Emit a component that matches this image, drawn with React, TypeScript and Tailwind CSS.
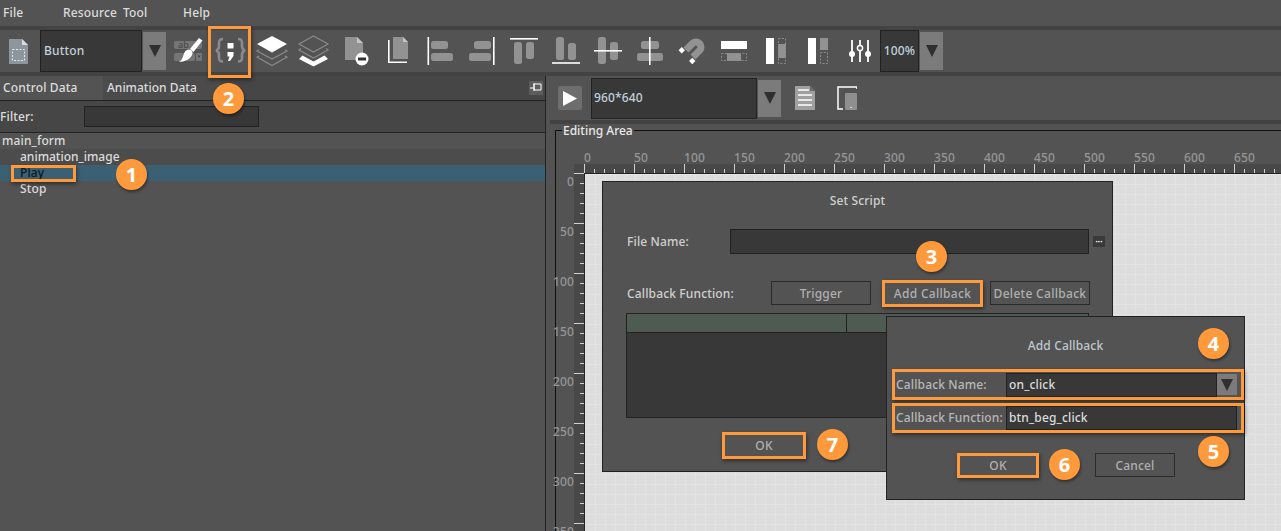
import type { ReactNode } from 'react'

const FONT = "font-['Noto_Sans',sans-serif]"
const HL = 'border-[3px] border-[#ff9a3c] shadow-[1px_2px_4px_rgba(0,0,0,0.45)]'

function Badge({ n, className }: { n: number; className: string }) {
  return (
    <div className={`absolute w-[31px] h-[31px] rounded-full bg-[#ff9a3c] text-white text-[20px] font-bold flex items-center justify-center shadow-[1px_2px_3px_rgba(0,0,0,0.4)] ${className}`}>
      {n}
    </div>
  )
}

function Arrow({ className }: { className: string }) {
  return (
    <div className={`bg-[#7b7b7b] flex items-center justify-center shrink-0 ${className}`}>
      <svg width="12" height="12" viewBox="0 0 12 12"><path d="M0 0h12L6 12z" fill="#303030" /></svg>
    </div>
  )
}

function Tool({ children }: { children: ReactNode }) {
  return (
    <div className="w-[42px] h-[42px] flex items-center justify-center shrink-0">
      <svg width="42" height="42" viewBox="0 0 42 42">{children}</svg>
    </div>
  )
}

const G = '#929292'
const D = '#8a8a8a'

function Toolbar() {
  return (
    <div className="h-[42px] flex items-center bg-[#535353]">
      <div className="w-[40px] h-[42px] flex items-center pl-[9px]">
        <svg width="20" height="25" viewBox="0 0 20 25">
          <path d="M0 0h13l6 6v19H0z" fill="#8d969c" />
          <path d="M13 0l6 6h-6z" fill="#d8dcdf" />
          <rect x="3.500" y="10.500" width="12" height="11" fill="none" stroke="#e4e8ea" strokeWidth="1" strokeDasharray="2 1.500" />
        </svg>
      </div>
      <div className="w-[102px] h-[42px] bg-[#383838] border border-[#222] flex items-center pl-[3px] text-[12px] text-[#c4d0dc]">Button</div>
      <Arrow className="w-[23px] h-[38px] mx-px" />
      <Tool>
        <rect x="7" y="11" width="28" height="8" rx="2" fill="#757575" />
        <text x="11" y="18" fontSize="9" fill="#4a4a4a" fontFamily="Noto Sans, sans-serif">ab</text>
        <rect x="7" y="23" width="21" height="8" rx="2" fill="#757575" />
        <rect x="29" y="23" width="6" height="8" rx="1" fill="#757575" />
        <path d="M30.500 25.500h3L32 28z" fill="#4a4a4a" />
        <path d="M32 8l3.500 2.500-9 11.500-3.500-3z" fill="#fff" />
        <path d="M21 19.500c3-.5 5 1.500 4.500 4-.8 5-8 8.500-14 8.500 3.500-1.500 4-4 5-7 .6-3 2.500-5 4.500-5.500z" fill="#fff" />
      </Tool>
      <Tool>
        <path d="M14 9c-3 0-4 1-4 4v3c0 2-1 4-3 4.500 2 .5 3 2.500 3 4.500v2.500c0 3 1 4 4 4M29 9c3 0 4 1 4 4v3c0 2 1 4 3 4.500-2 .5-3 2.500-3 4.500v2.500c0 3-1 4-4 4" fill="none" stroke={D} strokeWidth="2.600" />
        <rect x="18.500" y="13" width="6" height="5.500" fill="#fff" />
        <path d="M18.500 22h6v4l-3.500 5h-2l1.500-4.500h-2z" fill="#fff" />
      </Tool>
      <Tool>
        <path d="M8 20l-2 1 15 8 15-8-2-1M8 26l-2 1 15 8.500 15-8.500-2-1" fill="none" stroke={D} strokeWidth="1.200" />
        <path d="M21 6l15 8-15 8.500L6 14z" fill="#fff" />
      </Tool>
      <Tool>
        <path d="M20.500 6l14.500 8-14.500 8L6 14zM8 18.500L6 20l14.500 8L35 20l-2-1.500" fill="none" stroke={D} strokeWidth="1.200" />
        <path d="M6 29l3.500-3.500 11 6 11-6L35 29l-14.500 7.500z" fill="#fff" />
      </Tool>
      <Tool>
        <path d="M10 7h12l6 6v11c-4 0-6 2-7 6H10z" fill={G} />
        <path d="M22 7l6 6h-6z" fill="#c4c4c4" />
        <circle cx="27" cy="29" r="6.500" fill="#fff" />
        <rect x="23" y="27.500" width="8" height="3" fill="#333" />
      </Tool>
      <Tool>
        <path d="M16 7h10l5 5v17H16z" fill={G} />
        <path d="M26 7l5 5h-5z" fill="#c4c4c4" />
        <path d="M11.800 10v22.200H30" fill="none" stroke="#fff" strokeWidth="1.600" />
      </Tool>
      <Tool>
        <rect x="8.500" y="7" width="1.600" height="28" fill="#fff" />
        <rect x="12" y="11" width="17" height="8" rx="2.500" fill={G} />
        <rect x="12" y="23" width="22" height="8" rx="2.500" fill={G} />
      </Tool>
      <Tool>
        <rect x="32" y="7" width="1.600" height="28" fill="#fff" />
        <rect x="13" y="11" width="17" height="8" rx="2.500" fill={G} />
        <rect x="8" y="23" width="22" height="8" rx="2.500" fill={G} />
      </Tool>
      <Tool>
        <rect x="7" y="8" width="28" height="1.600" fill="#fff" />
        <rect x="11" y="12" width="8" height="22" rx="2.500" fill={G} />
        <rect x="23" y="12" width="8" height="17" rx="2.500" fill={G} />
      </Tool>
      <Tool>
        <rect x="7" y="32.200" width="28" height="1.600" fill="#fff" />
        <rect x="11" y="7" width="8" height="23" rx="2.500" fill={G} />
        <rect x="23" y="13" width="8" height="17" rx="2.500" fill={G} />
      </Tool>
      <Tool>
        <rect x="11" y="7" width="8" height="27" rx="2.500" fill={G} />
        <rect x="23" y="12" width="8" height="18" rx="2.500" fill={G} />
        <rect x="7" y="20" width="28" height="1.600" fill="#fff" />
      </Tool>
      <Tool>
        <rect x="12" y="11" width="18" height="8" rx="2.500" fill={G} />
        <rect x="8" y="23" width="26" height="8" rx="2.500" fill={G} />
        <rect x="20" y="7" width="1.600" height="28" fill="#fff" />
      </Tool>
      <Tool>
        <path d="M15 20l7-7a5 5 0 0 1 7 7l-7 7" fill="none" stroke={G} strokeWidth="7" />
        <rect x="8.500" y="18" width="4.500" height="4.500" transform="rotate(45 10.750 20.250)" fill="#fff" />
        <rect x="19" y="28.700" width="4.500" height="4.500" transform="rotate(45 21.250 30.950)" fill="#fff" />
      </Tool>
      <Tool>
        <rect x="8" y="11" width="26" height="8" fill="#fff" />
        <rect x="14" y="23" width="14" height="8" fill={G} />
        <rect x="8.500" y="23.500" width="25" height="7" fill="none" stroke={D} strokeWidth="1" strokeDasharray="2 1.500" />
      </Tool>
      <Tool>
        <rect x="11" y="8" width="8" height="26" fill="#fff" />
        <rect x="23" y="14" width="8" height="14" fill={G} />
        <rect x="23.500" y="8.500" width="7" height="25" fill="none" stroke={D} strokeWidth="1" strokeDasharray="2 1.500" />
      </Tool>
      <Tool>
        <rect x="11" y="8" width="8" height="26" fill="#fff" />
        <rect x="23" y="8" width="8" height="12" fill={G} />
        <rect x="23.500" y="22.500" width="7" height="11" fill="none" stroke={D} strokeWidth="1" strokeDasharray="2 1.500" />
      </Tool>
      <Tool>
        <path d="M13 10v22M21 10v22M29 10v22" stroke="#fff" strokeWidth="1.800" />
        <circle cx="13" cy="24" r="3" fill="#fff" />
        <circle cx="21" cy="18" r="2.600" fill="#535353" stroke="#fff" strokeWidth="1.500" />
        <circle cx="29" cy="24" r="3" fill="#fff" />
      </Tool>
      <div className="w-[39px] h-[42px] bg-[#383838] border border-[#222] flex items-center justify-center text-[12px] text-[#c4d0dc] -ml-px">100%</div>
      <Arrow className="w-[23px] h-[38px] ml-px" />
    </div>
  )
}

function LeftPanel() {
  return (
    <div className="w-[546px] shrink-0 border-r border-[#222] text-[12px] text-[#dcdcdc] flex flex-col">
      <div className="h-[24px] flex bg-[#464646] relative">
        <div className="w-[103px] bg-[#535353] pl-[3px] flex items-center">Control Data</div>
        <div className="w-[117px] bg-[#4b4b4b] pl-[4px] flex items-center tracking-normal">Animation Data</div>
        <div className="absolute right-[2px] top-[5px] w-[14px] h-[14px] bg-[#5c5c5c] flex items-center justify-center">
          <svg width="12" height="12" viewBox="0 0 12 12"><path d="M0 6h4M4 2h7v6H4zM4 1v8" fill="none" stroke="#fff" strokeWidth="1" /></svg>
        </div>
      </div>
      <div className="h-[33px] bg-[#464646] border-y border-[#222] flex items-center">
        <span className="w-[84px]">Filter:</span>
        <div className="w-[175px] h-[21px] bg-[#383838] border border-[#222]" />
      </div>
      <div className="h-[16px] leading-[16px] pl-[2px]">main_form</div>
      <div className="h-[16px] leading-[16px] pl-[20px] bg-[#4c4c4c] tracking-normal">animation_image</div>
      <div className="h-[16px] leading-[16px] pl-[20px] bg-[#3c6073] text-[#0d1720]">Play</div>
      <div className="h-[16px] leading-[16px] pl-[20px]">Stop</div>
    </div>
  )
}

const HTICKS = Array.from({ length: 70 }, (_, i) => i * 10)
const VTICKS = Array.from({ length: 36 }, (_, i) => i * 10)

function TopRuler() {
  return (
    <svg width="725" height="42" className="block shrink-0">
      <rect x="18" y="33" width="707" height="9" fill="#484848" />
      {HTICKS.map(v => (
        <rect key={v} x={28 + v} y={v % 50 === 0 ? 33 : 38} width="1" height={v % 50 === 0 ? 9 : 4} fill="#d0d0d0" />
      ))}
      {HTICKS.filter(v => v % 50 === 0).map(v => (
        <text key={v} x={28 + v} y="31" fontSize="12" fontWeight="500" fill="#969696" fontFamily="Noto Sans, sans-serif">{v}</text>
      ))}
    </svg>
  )
}

function LeftRuler() {
  return (
    <svg width="28" height="358" className="block shrink-0 overflow-visible">
      <rect x="18" y="0" width="10" height="358" fill="#484848" />
      {VTICKS.map(v => (
        <rect key={v} x={v % 50 === 0 ? 18 : 24} y={v} width={v % 50 === 0 ? 10 : 4} height="1" fill="#d0d0d0" />
      ))}
      {VTICKS.filter(v => v % 50 === 0).map(v => (
        <text key={v} x="18" y={v + 13} textAnchor="end" fontSize="12" fontWeight="500" fill="#969696" fontFamily="Noto Sans, sans-serif">{v}</text>
      ))}
    </svg>
  )
}

function Btn({ children, className }: { children: ReactNode; className: string }) {
  return <div className={`flex items-center justify-center text-[#b0b0b0] ${className}`}>{children}</div>
}

function SetScript() {
  return (
    <div className="absolute left-[17px] top-[7px] w-[511px] h-[291px] bg-[#535353] border border-[#222] text-[12px] text-[#d0d0d0] pl-[23px]">
      <div className="h-[37px] -ml-[23px] flex items-center justify-center">Set Script</div>
      <div className="h-[25px] mt-[10px] flex items-center">
        <span className="w-[103px] ml-px shrink-0">File Name:</span>
        <div className="w-[359px] h-[25px] shrink-0 bg-[#383838] border border-[#222]" />
        <div className="w-[12px] h-[11px] ml-[4px] shrink-0 bg-[#3a3a3a] flex items-center justify-center text-white text-[6px] leading-none">•••</div>
      </div>
      <div className="h-[28px] mt-[25px] flex items-center">
        <span className="w-[144px] ml-px pt-px shrink-0">Callback Function:</span>
        <Btn className="w-[100px] h-[24px] pt-px border border-[#2a2a2a]">Trigger</Btn>
        <Btn className={`w-[101px] h-[27px] ml-[11px] pt-px tracking-[0.3px] ${HL}`}>Add Callback</Btn>
        <Btn className="w-[100px] h-[24px] ml-[7px] pt-px tracking-[0.3px] border border-[#2a2a2a]">Delete Callback</Btn>
      </div>
      <div className="w-[463px] h-[105px] mt-[6px] bg-[#383838] border border-[#222] flex flex-col">
        <div className="h-[19px] bg-[#4e5b52] border-b border-[#222] flex">
          <div className="w-[220px] border-r border-[#222]" />
        </div>
      </div>
      <Btn className={`w-[84px] h-[27px] mt-[14px] ml-[96px] ${HL}`}>OK</Btn>
    </div>
  )
}

function AddCallback() {
  return (
    <div className="absolute left-[301px] top-[142px] w-[359px] h-[184px] bg-[#535353] border border-[#222] text-[12px] text-[#d0d0d0] pl-[5px]">
      <div className="h-[52px] pt-[5px] -ml-[5px] flex items-center justify-center text-[#c0c8d0]">Add Callback</div>
      <div className={`w-[352px] h-[31px] flex items-center pl-[1px] ${HL}`}>
        <span className="w-[110px] shrink-0 text-[#b8b8b8]">Callback Name:</span>
        <div className="w-[211px] h-[24px] bg-[#383838] border border-[#222] flex items-center pl-[2px] text-[#dcdcdc]">on_click</div>
        <Arrow className="w-[20px] h-[21px]" />
      </div>
      <div className={`w-[352px] h-[30px] mt-[3px] flex items-center pl-[1px] ${HL}`}>
        <span className="w-[110px] shrink-0 pb-px text-[#b8b8b8]">Callback Function:</span>
        <div className="w-[231px] h-[24px] bg-[#383838] border border-[#222] flex items-center pl-[2px] pb-px text-[#dcdcdc]">btn_beg_click</div>
      </div>
      <div className="flex mt-[20px] items-start">
        <Btn className={`w-[82px] h-[25px] ml-[65px] ${HL}`}>OK</Btn>
        <Btn className="w-[80px] h-[24px] ml-[56px] pt-px border border-[#2a2a2a]">Cancel</Btn>
      </div>
    </div>
  )
}

function RightPanel() {
  return (
    <div className="flex-1 min-w-0 flex flex-col ml-[4px]">
      <div className="h-[44px] bg-[#535353] flex items-center shrink-0">
        <div className="w-[24px] h-[24px] ml-[8px] rounded-[2px] bg-[#6e6e6e] flex items-center justify-center">
          <svg width="14" height="15" viewBox="0 0 14 15"><path d="M0 0l14 7.500L0 15z" fill="#fff" /></svg>
        </div>
        <div className="w-[166px] h-[41px] ml-[9px] bg-[#383838] border border-[#222] flex items-center pl-[2px] text-[12px] text-[#c4d0dc]">960*640</div>
        <Arrow className="w-[23px] h-[37px] ml-px" />
        <svg width="20" height="24" viewBox="0 0 20 24" className="ml-[14px]">
          <path d="M0 0h15l5 5v19H0z" fill="#a0a0a0" />
          <path d="M15 0l5 5h-5z" fill="#6a6a6a" />
          <path d="M3 4h11M3 9h14M3 14h14M3 19h14" stroke="#fff" strokeWidth="1.500" />
        </svg>
        <svg width="20" height="24" viewBox="0 0 20 24" className="ml-[22px]">
          <path d="M20 3V1H1v22h5" fill="none" stroke="#fff" strokeWidth="1.500" />
          <rect x="8" y="7" width="12" height="17" rx="1" fill="#8f8f8f" />
          <rect x="13" y="21" width="2" height="1" fill="#ddd" />
        </svg>
      </div>
      <div className="h-[4px] bg-[#434343] shrink-0" />
      <div className="flex-1 min-h-0 pl-[5px] pt-[6px] bg-[#535353]">
        <div className="relative h-full border-l border-t border-[#111] flex flex-col">
          <span className="absolute left-[6px] top-[-7px] bg-[#535353] px-px text-[12px] leading-[14px] tracking-normal text-[#e8e8e8]">Editing Area</span>
          <TopRuler />
          <div className="flex-1 min-h-0 flex">
            <LeftRuler />
            <div className="relative flex-1 border-l border-t border-[#222] bg-[#dddddd] bg-[linear-gradient(#e3e3e3_1px,transparent_1px),linear-gradient(90deg,#e3e3e3_1px,transparent_1px)] bg-[size:10px_10px]">
              <SetScript />
              <AddCallback />
            </div>
          </div>
        </div>
      </div>
    </div>
  )
}

export default function App() {
  return (
    <div className={`relative w-[1281px] h-[531px] overflow-hidden bg-[#434343] flex flex-col font-medium tracking-[0.15px] ${FONT}`}>
      <div className="h-[26px] bg-[#535353] relative text-[12px] text-[#dcdcdc] shrink-0 flex items-center pl-[3px]">
        <span className="w-[60px]">File</span>
        <span className="w-[60px]">Resource</span>
        <span className="w-[60px]">Tool</span>
        <span>Help</span>
      </div>
      <div className="h-[4px] shrink-0" />
      <Toolbar />
      <div className="h-[4px] shrink-0" />
      <div className="flex-1 min-h-0 flex bg-[#535353]">
        <LeftPanel />
        <RightPanel />
      </div>

      <div className={`absolute left-[208px] top-[26px] w-[43px] h-[52px] ${HL}`} />
      <div className={`absolute left-[11px] top-[165px] w-[65px] h-[17px] ${HL}`} />
      <Badge n={1} className="left-[116px] top-[159px]" />
      <Badge n={2} className="left-[213px] top-[83px]" />
      <Badge n={3} className="left-[916px] top-[241px]" />
      <Badge n={4} className="left-[1198px] top-[328px]" />
      <Badge n={5} className="left-[1198px] top-[436px]" />
      <Badge n={6} className="left-[1049px] top-[449px]" />
      <Badge n={7} className="left-[817px] top-[429px]" />
    </div>
  )
}
